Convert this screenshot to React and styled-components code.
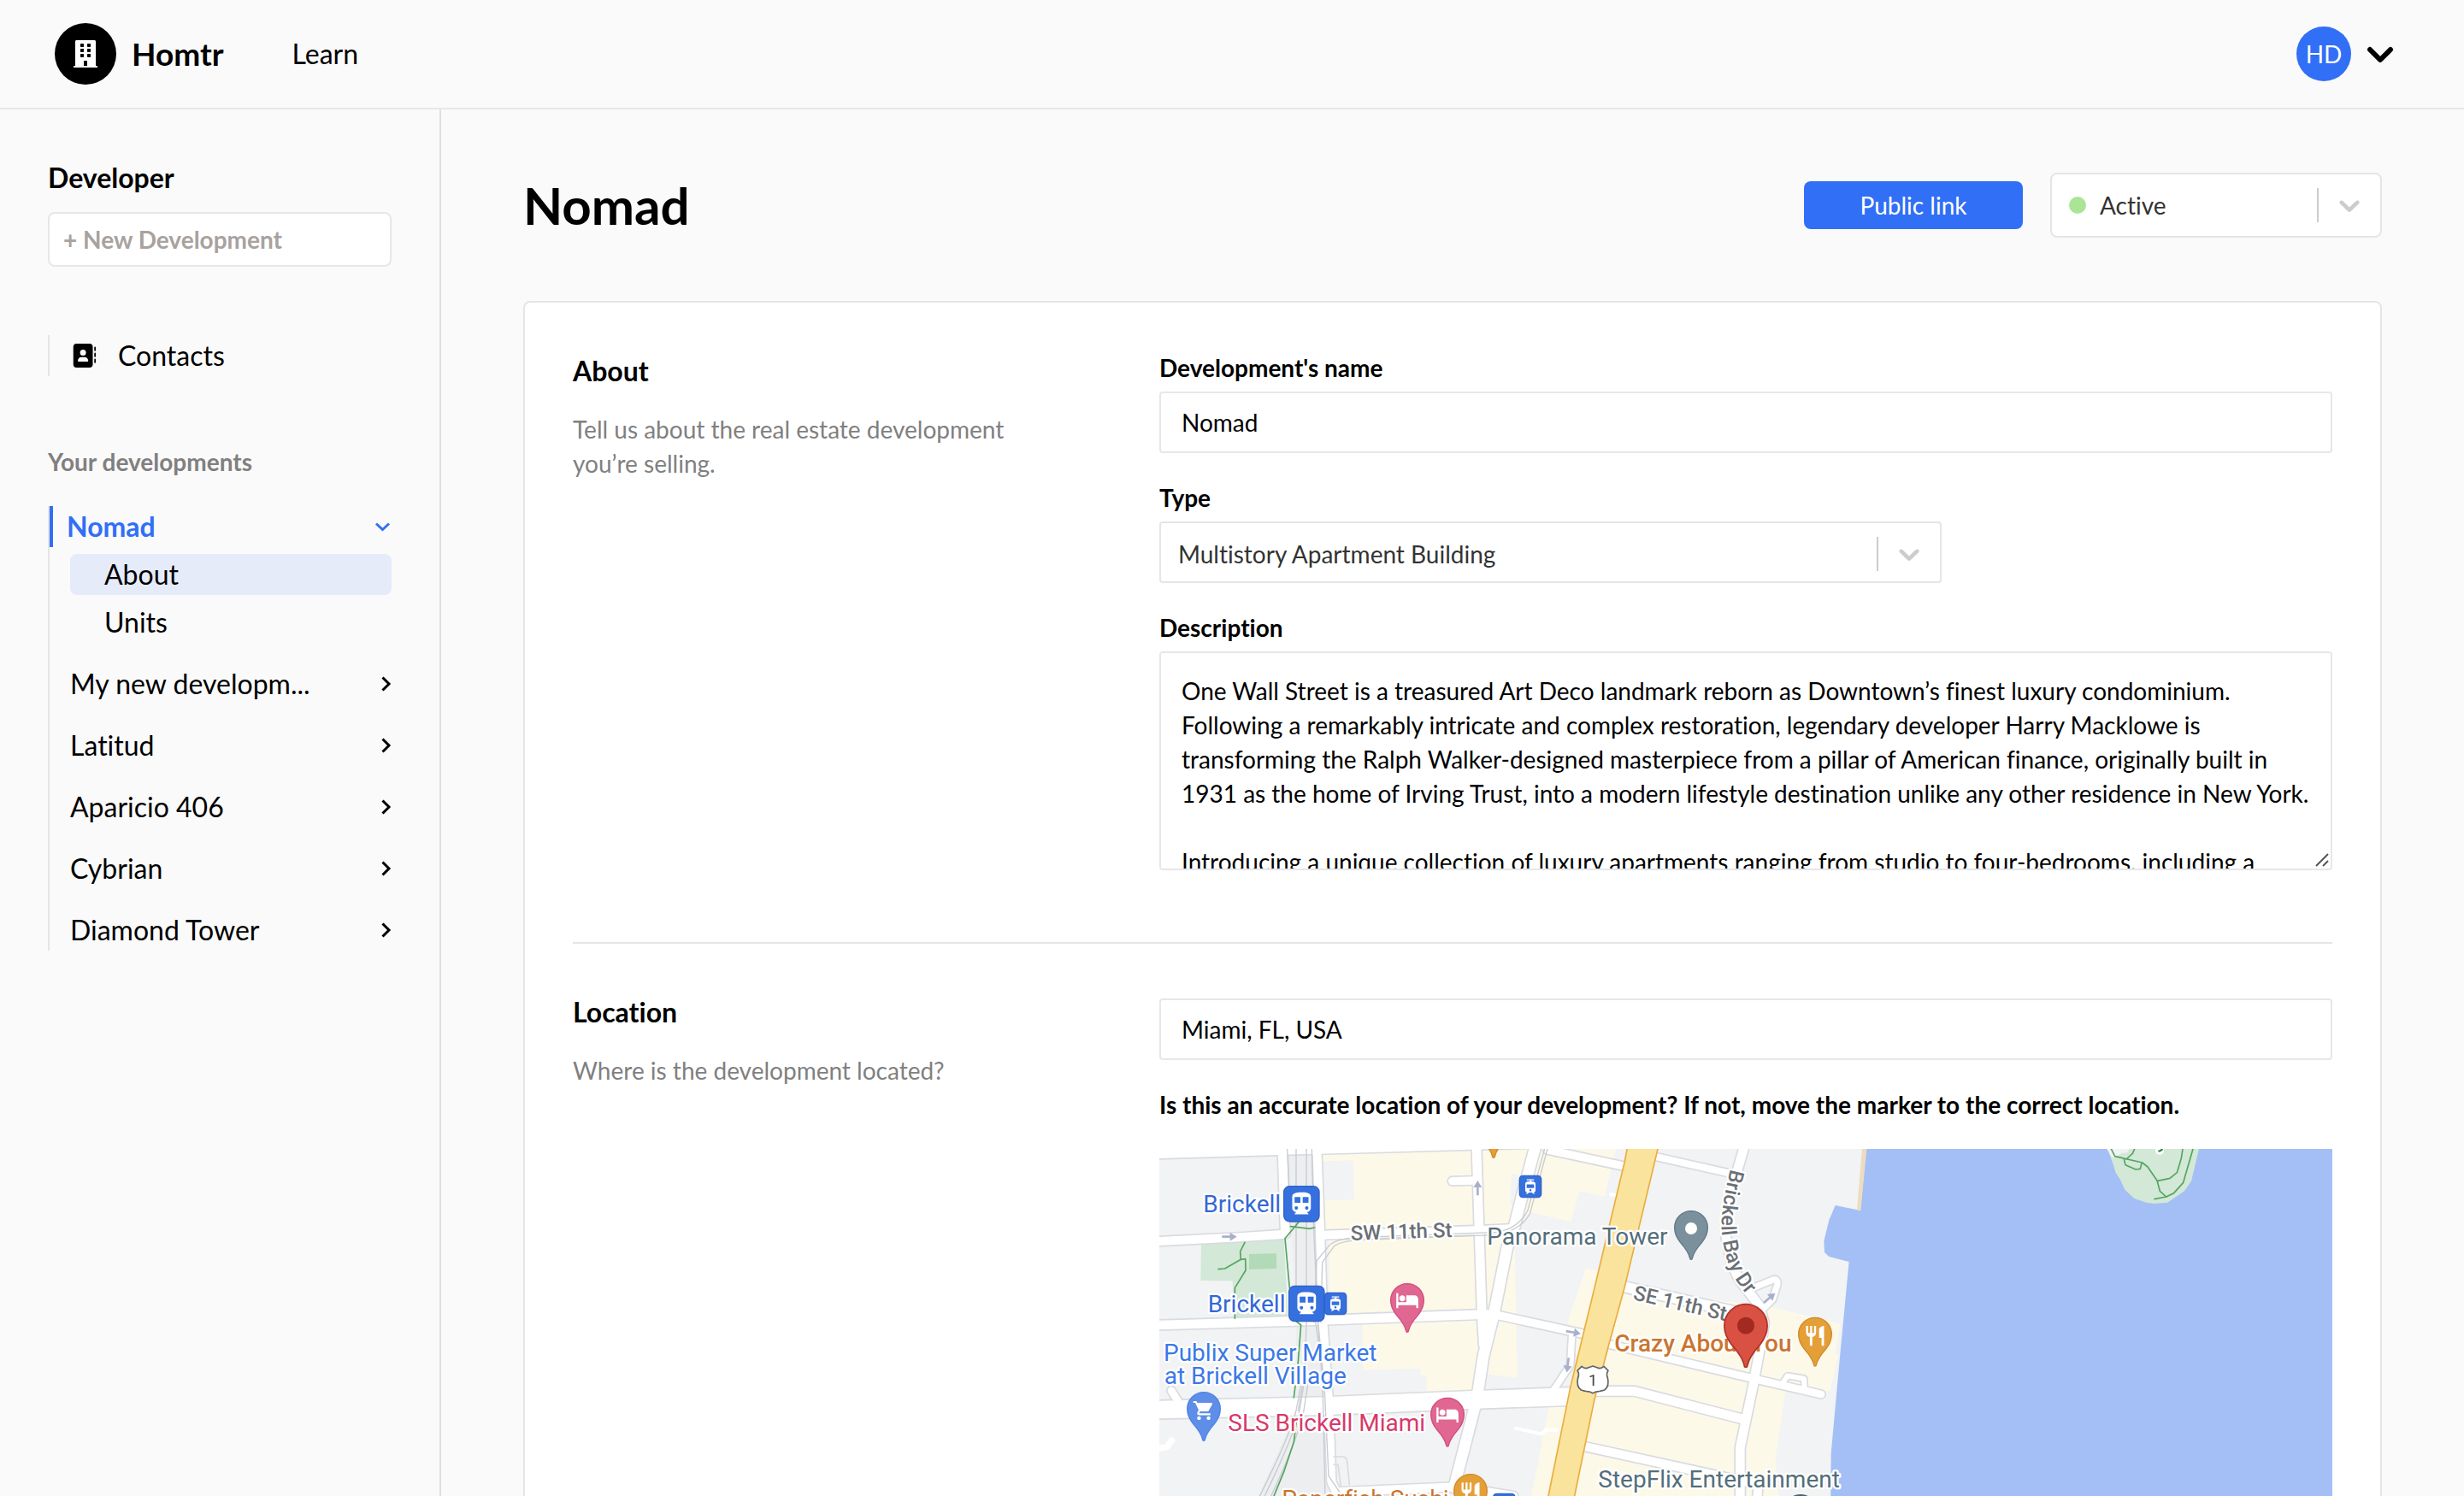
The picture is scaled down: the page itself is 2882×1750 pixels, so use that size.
import React from 'react'
import styled, { createGlobalStyle } from 'styled-components'
import { FaBuilding } from 'react-icons/fa'
import { FaAddressBook } from 'react-icons/fa6'
import { MdDirectionsSubway, MdHotel, MdRestaurant, MdShoppingCart, MdTram } from 'react-icons/md'

const GlobalStyle = createGlobalStyle`
  * {
    box-sizing: border-box;
  }
  body {
    margin: 0;
    background: #fafafa;
    color: #000;
    font-family: Lato, 'Open Sans', sans-serif;
    font-size: 28px;
    font-variant-ligatures: no-common-ligatures;
    line-height: 40px;
  }
  h1, h2, h3, p, ul {
    margin: 0;
    padding: 0;
  }
  ul {
    list-style: none;
  }
  a {
    color: inherit;
    text-decoration: none;
  }
  button, input, select, textarea {
    font: inherit;
    color: inherit;
  }
`

const Page = styled.div`
  display: flex;
  flex-direction: column;
  height: 100vh;
`

const Header = styled.header`
  display: flex;
  align-items: center;
  flex-shrink: 0;
  padding: 27px 80px 27px 64px;
  border-bottom: 2px solid #e5e7eb;
`

const Brand = styled.a`
  display: flex;
  align-items: center;
  gap: 18px;
  font-size: 37px;
  font-weight: 700;
`

const BrandMark = styled.span`
  display: grid;
  place-items: center;
  width: 72px;
  height: 72px;
  border-radius: 50%;
  background: #000;
  color: #fff;
`

const HeaderLink = styled.a`
  margin-left: 80px;
  font-size: 32px;
`

const UserButton = styled.button`
  display: flex;
  align-items: center;
  gap: 16px;
  margin-left: auto;
  padding: 0;
  border: 0;
  background: none;
`

const Avatar = styled.span`
  display: grid;
  place-items: center;
  width: 64px;
  height: 64px;
  border-radius: 50%;
  background: #316ff6;
  color: #fff;
`

const Body = styled.div`
  display: flex;
  flex: 1;
  min-height: 0;
`

const Sidebar = styled.aside`
  flex: 0 0 516px;
  padding: 56px;
  border-right: 2px solid #e0e0e0;
`

const SidebarTitle = styled.h2`
  font-size: 32px;
  line-height: 48px;
`

const NewButton = styled.button`
  display: block;
  width: 100%;
  height: 64px;
  margin-top: 16px;
  padding: 0 16px;
  border: 2px solid #e5e7eb;
  border-radius: 8px;
  background: #fff;
  color: #a8a29e;
  font-weight: 700;
  text-align: left;
`

const ContactsLink = styled.a`
  display: flex;
  align-items: center;
  gap: 26px;
  margin-top: 80px;
  padding-left: 26px;
  border-left: 2px solid #e5e5e5;
  font-size: 32px;
  line-height: 48px;
`

const SidebarLabel = styled.h3`
  margin: 80px 0 32px;
  color: #808080;
  font-size: 28px;
`

const DevelopmentList = styled.ul`
  display: flex;
  flex-direction: column;
  gap: 24px;
  border-left: 2px solid #e5e5e5;
  font-size: 32px;
  line-height: 48px;
`

const DevelopmentButton = styled.button`
  display: flex;
  align-items: center;
  justify-content: space-between;
  width: 100%;
  padding: 0 0 0 ${({ $open }) => ($open ? '16px' : '24px')};
  border: 0;
  border-left: ${({ $open }) => ($open ? '4px solid #316ff6' : '0')};
  background: none;
  color: ${({ $open }) => ($open ? '#316ff6' : '#000')};
  font-weight: ${({ $open }) => ($open ? 700 : 400)};
  text-align: left;
`

const SubLink = styled.a`
  display: block;
  margin: 8px 0 0 24px;
  padding-left: 40px;
  border-radius: 8px;
  background: ${({ $active }) => ($active ? '#e6ebfa' : 'transparent')};
`

const Main = styled.main`
  flex: 1;
  min-width: 0;
  padding: 72px 96px;
  overflow-y: auto;
  scrollbar-width: none;
`

const TitleBar = styled.div`
  display: flex;
  align-items: center;
  gap: 32px;
  min-height: 80px;
  margin-bottom: 72px;
`

const Title = styled.h1`
  margin-right: auto;
  font-size: 60px;
  line-height: 72px;
`

const PublicLink = styled.a`
  width: 256px;
  border-radius: 8px;
  background: #316ff6;
  color: #fff;
  line-height: 56px;
  text-align: center;
`

const SelectBox = styled.div`
  display: flex;
  align-items: center;
  width: ${({ $width }) => $width};
  height: ${({ $tall }) => ($tall ? '76px' : '72px')};
  padding: ${({ $tall }) => ($tall ? '0 16px 0 20px' : '4px 16px 0 20px')};
  border: 2px solid #e5e5e8;
  border-radius: ${({ $tall }) => ($tall ? '8px' : '4px')};
  background: #fff;
  color: #333;

  select {
    flex: 1;
    height: 40px;
    min-width: 0;
    padding: 0;
    border: 0;
    background: none;
    appearance: none;
    outline: none;
  }
`

const StatusDot = styled.span`
  width: 20px;
  height: 20px;
  margin-right: 16px;
  border-radius: 50%;
  background: #aae595;
`

const Separator = styled.span`
  width: 2px;
  height: 40px;
  margin-right: 16px;
  background: #ccc;
`

const Card = styled.div`
  padding: 0 56px;
  border: 2px solid #e5e5e5;
  border-radius: 8px;
  background: #fff;
`

const Section = styled.section`
  display: grid;
  grid-template-columns: 1fr 2fr;
  padding: 56px 0 84px;

  & + & {
    border-top: 2px solid #e5e5e5;
  }
`

const SectionIntro = styled.div`
  padding-right: 128px;

  h2 {
    margin-bottom: 24px;
    font-size: 32px;
    line-height: 48px;
  }
  p {
    color: #808080;
  }
`

const Fields = styled.div`
  display: flex;
  flex-direction: column;
  gap: 32px;
  padding-top: ${({ $unlabelled }) => ($unlabelled ? '8px' : '0')};
`

const Field = styled.div`
  display: flex;
  flex-direction: column;
  gap: 8px;
`

const Label = styled.label`
  font-weight: 700;
`

const TextInput = styled.input`
  width: 100%;
  height: 72px;
  padding: 0 24px;
  border: 2px solid #e5e7eb;
  border-radius: 4px;
  background: #fff;
`

const TextAreaWrap = styled.div`
  position: relative;
  display: flex;
`

const TextArea = styled.textarea`
  width: 100%;
  height: 256px;
  padding: 24px;
  border: 2px solid #e5e7eb;
  border-radius: 4px;
  background: #fff;
  resize: none;
  scrollbar-width: none;
`

const Grip = styled.svg`
  position: absolute;
  right: 4px;
  bottom: 4px;
  pointer-events: none;
`

const Question = styled.p`
  font-weight: 700;
`

const MapBox = styled.svg`
  display: block;
  width: 100%;
  background: #f1f3f4;
  font-family: Roboto, sans-serif;
`

const MapLabel = styled.text`
  font-size: ${({ $size }) => $size || 84}px;
  font-weight: ${({ $medium }) => ($medium ? 500 : 400)};
  fill: ${({ $color }) => $color};
  stroke: #fff;
  stroke-width: 14px;
  stroke-linejoin: round;
  paint-order: stroke;
`

function Chevron({ direction }) {
  const down = direction === 'down'
  return (
    <svg width={down ? 20 : 12} height="20" viewBox={down ? '0 0 20 20' : '0 0 12 20'} fill="none" stroke="currentColor" strokeWidth="3">
      {down ? <path d="M2 6.500l7.500 7 7.500-7" /> : <path d="M1.500 2.500l7.500 7.500-7.500 7.500" />}
    </svg>
  )
}

function SelectArrow() {
  return (
    <svg width="40" height="40" viewBox="0 0 20 20" fill="#ccc">
      <path d="M4.516 7.548c0.436-0.446 1.043-0.481 1.576 0l3.908 3.747 3.908-3.747c0.533-0.481 1.141-0.446 1.574 0 0.436 0.445 0.408 1.197 0 1.615-0.406 0.418-4.695 4.502-4.695 4.502-0.217 0.223-0.502 0.335-0.787 0.335s-0.57-0.112-0.789-0.335c0 0-4.287-4.084-4.695-4.502s-0.436-1.17 0-1.615z" />
    </svg>
  )
}

function Select({ id, label, value, width, tall, dot }) {
  return (
    <SelectBox $width={width} $tall={tall}>
      {dot && <StatusDot />}
      <select id={id} aria-label={label} defaultValue={value}>
        <option>{value}</option>
      </select>
      <Separator />
      <SelectArrow />
    </SelectBox>
  )
}

const streets = [
  { d: 'M18 28L432 16L1300 -8', w: 34 },
  { d: 'M450 12L460 310', w: 32 },
  { d: 'M571 12L582 300L592 620L612 900L622 1180L650 1240', w: 30 },
  { d: 'M18 336L300 322L450 312', w: 30 },
  { d: 'M590 314L1150 297L1250 292', w: 30 },
  { d: 'M18 630L500 616L1170 592', w: 32 },
  { d: 'M1190 592L1350 627L1515 663', w: 28 },
  { d: 'M18 927L600 914L1100 893L1480 880', w: 62 },
  { d: 'M1131 12L1140 290L1150 600L1156 700', w: 32 },
  { d: 'M1335 12L1290 180L1262 290L1238 360L1192 590L1155 740L1132 890L1052 1200', w: 38 },
  { d: 'M1046 125L1120 123', w: 28 },
  { d: 'M640 1216L1060 1198L1260 1230', w: 30 },
  { d: 'M60 860L85 900', w: 26 },
  { d: 'M1380 15L1660 75', w: 28 },
  { d: 'M1755 38L2030 100', w: 24 },
  { d: 'M2068 12L2040 110L2012 230Q2000 300 2012 350Q2030 440 2060 480L2122 560L2140 620L2135 660L2100 850L2056 1060L2056 1300', w: 32 },
  { d: 'M1655 497L2090 595', w: 36 },
  { d: 'M1595 697L2110 820L2340 873', w: 26 },
  { d: 'M2110 496L2175 470Q2190 470 2186 490L2170 540L2130 580', w: 22 },
  { d: 'M2206 832L2222 808L2280 818L2282 850', w: 18 },
  { d: 'M1535 862L1685 862L2065 960', w: 32 },
  { d: 'M1505 1055L1870 1135L2120 1190L2110 1300', w: 30 },
  { d: 'M1466 665L1460 770L1400 860', w: 22 },
]

const rails = [
  'M498 12L498 620', 'M534 12L534 620L528 800L505 930', 'M553 12L560 300L575 620L598 860L612 1160L650 1215',
  'M467 12L475 200', 'M566 620L590 790L600 1240',
  'M1190 305L720 322Q640 326 615 350L570 405L560 620', 'M1190 314L720 332Q650 336 630 355L590 410L585 620',
  'M1370 12L1310 230Q1270 300 1190 305', 'M1380 12L1318 240Q1280 305 1190 314',
  'M515 840L498 930Q480 1010 368 1235', 'M528 820L510 930Q490 1020 385 1235', 'M545 800L525 930Q500 1040 408 1235',
]

const paths = [
  'M508 268L459 326L475 500', 'M478 284L545 292L563 288',
  'M318 340L302 372L304 400L248 432L225 434', 'M304 400L320 398L321 438L283 500L283 607',
  'M500 618L515 630L505 760L490 885', 'M500 960L490 1040L455 1145L418 1235',
  'M3358 12L3371 38L3467 60L3486 75L3519 123L3529 160L3551 180L3510 188',
  'M3440 12L3433 28L3411 48', 'M3403 48L3408 68L3444 84L3460 82L3465 62',
  'M3609 12L3604 45L3589 95L3564 115L3521 124', 'M3645 12L3611 130L3578 167L3551 180',
]

function Pin({ x, y, fill, edge, scale = 1, children }) {
  return (
    <g transform={`translate(${x} ${y})`}>
      <path
        transform={`scale(${scale})`}
        d="M-58 0a58 58 0 1 1 116 0c0 22-9 38-20 52C20 72 8 90 4 108a4 4 0 0 1-8 0C-8 90-20 72-38 52-49 38-58 22-58 0z"
        fill={fill}
        stroke={edge}
        strokeWidth="4"
      />
      {children}
    </g>
  )
}

function Station({ x, y, small }) {
  const size = small ? 76 : 124
  const Icon = small ? MdTram : MdDirectionsSubway
  const glyph = small ? 62 : 98
  const inset = (size - glyph) / 2
  return (
    <g transform={`translate(${x} ${y})`}>
      <rect width={size} height={size} rx={small ? 12 : 20} fill="#3670de" stroke="#2f62c8" strokeWidth="4" />
      <Icon x={inset} y={inset} size={glyph} color="#fff" />
    </g>
  )
}

function Arrow({ x, y, angle }) {
  return (
    <path
      transform={`translate(${x} ${y}) rotate(${angle})`}
      d="M-26 -4H2V-15L26 0L2 15V4H-26z"
      fill="#a9b0cb"
    />
  )
}

function LocationMap() {
  return (
    <MapBox viewBox="18 12 4116 1440" role="img" aria-label="Map">
      <g fill="#fdf9e9">
        <path d="M588 12H1620L1580 180L1492 160L1462 267L1320 235L1250 290L598 310z" />
        <path d="M612 320L1240 310L1265 350L1270 580L1275 815L1150 800L1130 600L618 610z" />
        <path d="M730 620L1140 600L1150 740L1115 870L955 870V808H935L933 783L733 788z" />
        <path d="M1385 915L1460 905L1400 1452H1280z" />
        <path d="M1515 430L1560 440L1500 800L1450 620z" />
        <path d="M1650 500L2155 565L2408 625L2388 730L2400 735L2372 862L2215 865L2205 930L2180 1100L2210 1452H1400z" />
      </g>
      <g fill="#f1f3f4">
        <path d="M592 55L698 52L702 190L597 192z" />
        <path d="M1253 98L1300 108L1285 235L1250 200z" />
      </g>
      <path d="M467 12H553L575 620L612 1240H360L500 930L498 620z" fill="#eceef0" />
      <path d="M165 345L455 330L470 605L283 610L275 475L163 474z" fill="#d3e8d7" />
      <path d="M333 381L429 379V432L333 435z" fill="#b3dab8" />
      <path d="M2498 12L2478 228L2390 210L2368 262L2350 335L2352 375L2368 390L2438 408L2410 700L2375 1080L2372 1452H4134V12z" fill="#a4bff5" />
      <path d="M2484 12H2500L2479 228L2466 224z" fill="#eddcc0" />
      <path d="M3345 12H3666L3639 125L3615 160L3556 200L3508 204L3481 200L3438 185L3406 155L3390 120L3374 95L3363 60z" fill="#d3e8d7" />
      <path d="M3343 12H3422L3412 26H3395L3376 38L3362 44z" fill="#f1f3f4" />

      <g fill="none" strokeLinejoin="round" strokeLinecap="round">
        <g stroke="#d9dbe0">
          {streets.map(({ d, w }) => <path key={d} d={d} strokeWidth={w + 10} />)}
        </g>
        <g stroke="#fff">
          {streets.map(({ d, w }) => <path key={d} d={d} strokeWidth={w} />)}
          <path d="M1268 992L1358 1012L1375 998H1412" strokeWidth="12" />
          <path d="M24 1062L45 1058L62 1034" strokeWidth="22" />
          <path d="M1602 172L1626 175" strokeWidth="12" />
        </g>
        <g stroke="#c8cbd0" strokeWidth="4">
          {rails.map((d) => <path key={d} d={d} />)}
        </g>
        <g stroke="#d9dbe0" strokeWidth="5">
          <path d="M630 1092H665Q675 1095 677 1110L685 1190M630 1120H645L655 1195" />
        </g>
        <g stroke="#53a55f" strokeWidth="5">
          {paths.map((d) => <path key={d} d={d} />)}
        </g>
      </g>

      <path
        d="M1662 0L1650 60L1540 520L1460 850L1383 1230L1330 1470H1425L1475 1230L1545 890L1595 700L1650 500L1770 0z"
        fill="#fae39d"
        stroke="#eaad3f"
        strokeWidth="5"
      />

      <Arrow x={264} y={320} angle={0} />
      <Arrow x={1135} y={149} angle={-90} />
      <Arrow x={1471} y={656} angle={10} />
      <Arrow x={1451} y={771} angle={97} />
      <Arrow x={2159} y={535} angle={-40} />

      <path id="bay-drive" d="M2022 82Q1988 215 1991 300Q2003 430 2068 510L2140 600" fill="none" />
      <MapLabel $color="#6b7075" $size={72} $medium>
        <textPath href="#bay-drive">Brickell Bay Dr</textPath>
      </MapLabel>
      <MapLabel $color="#6b7075" $size={72} $medium transform="translate(690 333) rotate(-2)">SW 11th St</MapLabel>
      <MapLabel $color="#6b7075" $size={72} $medium transform="translate(1678 540) rotate(13)">SE 11th St</MapLabel>
      <MapLabel $color="#3367d6" x="172" y="233">Brickell</MapLabel>
      <MapLabel $color="#3367d6" x="188" y="584">Brickell</MapLabel>
      <MapLabel $color="#3b78e7" x="33" y="755">Publix Super Market</MapLabel>
      <MapLabel $color="#3b78e7" x="35" y="838">at Brickell Village</MapLabel>
      <MapLabel $color="#d8396a" x="259" y="1003">SLS Brickell Miami</MapLabel>
      <MapLabel $color="#546e7a" x="1168" y="347">Panorama Tower</MapLabel>
      <MapLabel $color="#ca7530" $medium x="1615" y="722">Crazy About You</MapLabel>
      <MapLabel $color="#546e7a" x="1558" y="1199">StepFlix Entertainment</MapLabel>
      <MapLabel $color="#ca7530" x="448" y="1270">Paperfish Sushi</MapLabel>

      <Station x={455} y={143} />
      <Station x={473} y={493} />
      <Station x={598} y={517} small />
      <Station x={1282} y={106} small />
      <Station x={1190} y={1222} small />

      <Pin x={888} y={543} fill="#df6791" edge="#d64b7b"><MdHotel x={-42} y={-42} size={84} color="#fff" /></Pin>
      <Pin x={1029} y={944} fill="#df6791" edge="#d64b7b"><MdHotel x={-42} y={-42} size={84} color="#fff" /></Pin>
      <Pin x={174} y={924} fill="#5f8ee8" edge="#4f83e6"><MdShoppingCart x={-40} y={-34} size={80} color="#fff" /></Pin>
      <Pin x={1191} y={-69} fill="#e49f36" edge="#d08a2a" />
      <Pin x={1110} y={1212} fill="#e49f36" edge="#d08a2a"><MdRestaurant x={-42} y={-36} size={84} color="#fff" /></Pin>
      <Pin x={2319} y={662} fill="#e49f36" edge="#d08a2a"><MdRestaurant x={-42} y={-36} size={84} color="#fff" /></Pin>
      <Pin x={1884} y={288} fill="#7b909d" edge="#5f7885"><circle cy="3" r="21" fill="#fff" /></Pin>
      <Pin x={2268} y={1284} fill="#4f7077" edge="#3f5f66" />
      <Pin x={2076} y={632} fill="#d85142" edge="#b2322b" scale={1.3}><circle r="30" fill="#a32a21" /></Pin>

      <path
        d="M1500 775Q1512 786 1524 779L1539 774L1554 779Q1566 786 1578 775L1593 790Q1585 802 1591 815Q1598 845 1580 858Q1560 864 1550 864L1539 869L1528 864Q1518 864 1498 858Q1480 845 1487 815Q1493 802 1485 790z"
        fill="#fff"
        stroke="#5f6368"
        strokeWidth="5"
        strokeLinejoin="round"
      />
      <text x="1539" y="843" fontSize="54" fill="#3c4043" textAnchor="middle">1</text>
      <circle cx="3528" cy="17" r="15" fill="#fff" />
      <path d="M3523 20Q3534 20 3537 11" fill="none" stroke="#31873f" strokeWidth="7" />
    </MapBox>
  )
}

const developments = ['My new developm...', 'Latitud', 'Aparicio 406', 'Cybrian', 'Diamond Tower']

const description = `One Wall Street is a treasured Art Deco landmark reborn as Downtown’s finest luxury condominium. Following a remarkably intricate and complex restoration, legendary developer Harry Macklowe is transforming the Ralph Walker-designed masterpiece from a pillar of American finance, originally built in 1931 as the home of Irving Trust, into a modern lifestyle destination unlike any other residence in New York.

Introducing a unique collection of luxury apartments ranging from studio to four-bedrooms, including a`

function App() {
  return (
    <Page>
      <GlobalStyle />
      <Header>
        <Brand href="#">
          <BrandMark><FaBuilding size={32} /></BrandMark>
          Homtr
        </Brand>
        <HeaderLink href="#">Learn</HeaderLink>
        <UserButton type="button">
          <Avatar>HD</Avatar>
          <svg width="36" height="26" viewBox="0 0 36 26" fill="none" stroke="#000" strokeWidth="6" strokeLinecap="round" strokeLinejoin="round">
            <path d="M6 8l12 12 12-12" />
          </svg>
        </UserButton>
      </Header>
      <Body>
        <Sidebar>
          <SidebarTitle>Developer</SidebarTitle>
          <NewButton type="button">+ New Development</NewButton>
          <ContactsLink href="#">
            <FaAddressBook size={28} />
            Contacts
          </ContactsLink>
          <SidebarLabel>Your developments</SidebarLabel>
          <DevelopmentList>
            <li>
              <DevelopmentButton type="button" $open>
                Nomad
                <Chevron direction="down" />
              </DevelopmentButton>
              <SubLink href="#" $active>About</SubLink>
              <SubLink href="#">Units</SubLink>
            </li>
            {developments.map((name) => (
              <li key={name}>
                <DevelopmentButton type="button">
                  {name}
                  <Chevron direction="right" />
                </DevelopmentButton>
              </li>
            ))}
          </DevelopmentList>
        </Sidebar>
        <Main>
          <TitleBar>
            <Title>Nomad</Title>
            <PublicLink href="#">Public link</PublicLink>
            <Select label="Status" value="Active" width="388px" tall dot />
          </TitleBar>
          <Card>
            <Section>
              <SectionIntro>
                <h2>About</h2>
                <p>Tell us about the real estate development you’re selling.</p>
              </SectionIntro>
              <Fields>
                <Field>
                  <Label htmlFor="name">Development's name</Label>
                  <TextInput id="name" defaultValue="Nomad" />
                </Field>
                <Field>
                  <Label htmlFor="type">Type</Label>
                  <Select id="type" value="Multistory Apartment Building" width="calc(100% * 2 / 3)" />
                </Field>
                <Field>
                  <Label htmlFor="description">Description</Label>
                  <TextAreaWrap>
                    <TextArea id="description" defaultValue={description} />
                    <Grip width="16" height="16" viewBox="0 0 16 16" stroke="#555" strokeWidth="2">
                      <path d="M1 15L15 1M9 15L15 9" />
                    </Grip>
                  </TextAreaWrap>
                </Field>
              </Fields>
            </Section>
            <Section>
              <SectionIntro>
                <h2>Location</h2>
                <p>Where is the development located?</p>
              </SectionIntro>
              <Fields $unlabelled>
                <TextInput aria-label="Location" defaultValue="Miami, FL, USA" />
                <Question>Is this an accurate location of your development? If not, move the marker to the correct location.</Question>
                <LocationMap />
              </Fields>
            </Section>
          </Card>
        </Main>
      </Body>
    </Page>
  )
}

export default App
